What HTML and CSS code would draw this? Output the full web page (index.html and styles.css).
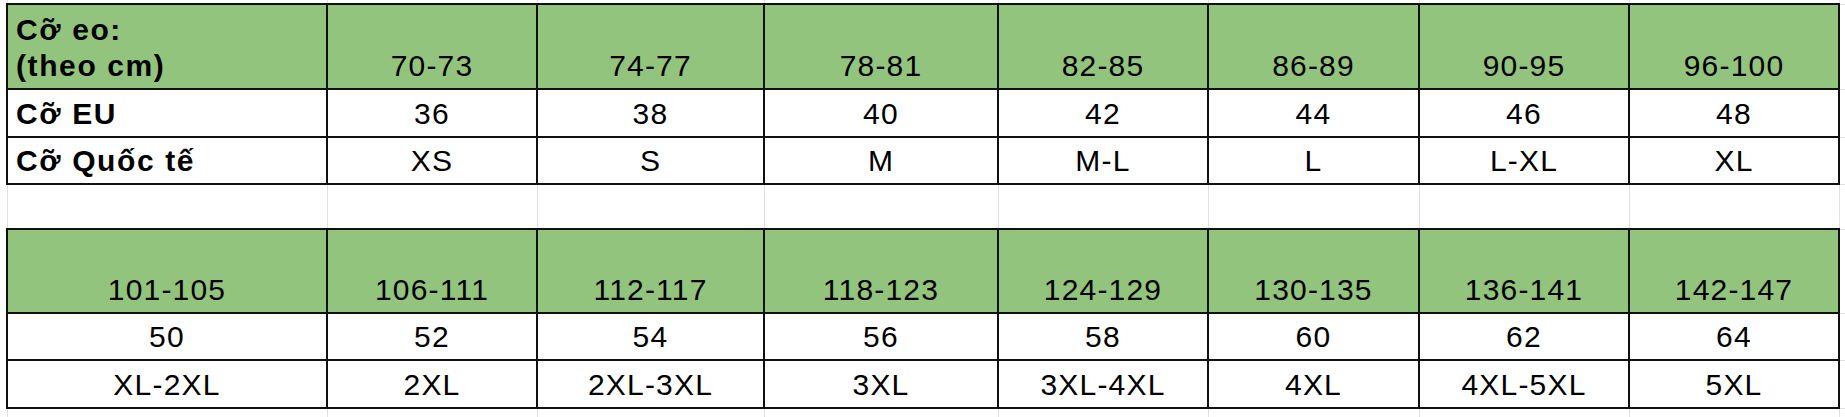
FILE: index.html
```html
<!DOCTYPE html>
<html lang="vi">
<head>
<meta charset="utf-8">
<title>Bảng cỡ</title>
<link rel="stylesheet" href="styles.css">
</head>
<body>
<table class="sheet">
  <colgroup>
    <col class="c-label">
    <col class="c-a"><col class="c-b"><col class="c-c"><col class="c-a"><col class="c-d"><col class="c-a"><col class="c-a">
    <col class="c-edge">
  </colgroup>
  <tbody>
    <tr class="r-top">
      <td class="grid"></td><td class="grid"></td><td class="grid"></td><td class="grid"></td><td class="grid"></td><td class="grid"></td><td class="grid"></td><td class="grid"></td><td class="grid"></td>
    </tr>
    <tr class="r-head">
      <td class="cell head label">Cỡ eo:<br>(theo cm)</td>
      <td class="cell head">70-73</td>
      <td class="cell head">74-77</td>
      <td class="cell head">78-81</td>
      <td class="cell head">82-85</td>
      <td class="cell head">86-89</td>
      <td class="cell head">90-95</td>
      <td class="cell head">96-100</td>
      <td class="grid"></td>
    </tr>
    <tr class="r-48">
      <td class="cell label">Cỡ EU</td>
      <td class="cell">36</td><td class="cell">38</td><td class="cell">40</td><td class="cell">42</td><td class="cell">44</td><td class="cell">46</td><td class="cell">48</td>
      <td class="grid"></td>
    </tr>
    <tr class="r-47">
      <td class="cell label">Cỡ Quốc tế</td>
      <td class="cell">XS</td><td class="cell">S</td><td class="cell">M</td><td class="cell">M-L</td><td class="cell">L</td><td class="cell">L-XL</td><td class="cell">XL</td>
      <td class="grid"></td>
    </tr>
    <tr class="r-gap">
      <td class="grid"></td><td class="grid"></td><td class="grid"></td><td class="grid"></td><td class="grid"></td><td class="grid"></td><td class="grid"></td><td class="grid"></td><td class="grid"></td>
    </tr>
    <tr class="r-head2">
      <td class="cell head">101-105</td>
      <td class="cell head">106-111</td>
      <td class="cell head">112-117</td>
      <td class="cell head">118-123</td>
      <td class="cell head">124-129</td>
      <td class="cell head">130-135</td>
      <td class="cell head">136-141</td>
      <td class="cell head">142-147</td>
      <td class="grid"></td>
    </tr>
    <tr class="r-47">
      <td class="cell">50</td><td class="cell">52</td><td class="cell">54</td><td class="cell">56</td><td class="cell">58</td><td class="cell">60</td><td class="cell">62</td><td class="cell">64</td>
      <td class="grid"></td>
    </tr>
    <tr class="r-48">
      <td class="cell">XL-2XL</td><td class="cell">2XL</td><td class="cell">2XL-3XL</td><td class="cell">3XL</td><td class="cell">3XL-4XL</td><td class="cell">4XL</td><td class="cell">4XL-5XL</td><td class="cell">5XL</td>
      <td class="grid"></td>
    </tr>
    <tr class="r-bottom">
      <td class="grid"></td><td class="grid"></td><td class="grid"></td><td class="grid"></td><td class="grid"></td><td class="grid"></td><td class="grid"></td><td class="grid"></td><td class="grid"></td>
    </tr>
  </tbody>
</table>
</body>
</html>
```
FILE: styles.css
```css
html, body {
  margin: 0;
  padding: 0;
  background: #ffffff;
}
body {
  overflow: hidden;
}
.sheet {
  margin-left: 6px;
  border-collapse: collapse;
  table-layout: fixed;
  width: 1838px;
  font-family: "Liberation Sans", Arial, sans-serif;
  font-size: 30px;
  letter-spacing: 1.2px;
  color: #000000;
}
.c-label { width: 320px; }
.c-a { width: 210px; }
.c-b { width: 227px; }
.c-c { width: 234px; }
.c-d { width: 211px; }
.c-edge { width: 6px; }

.sheet .grid {
  padding: 0;
  border: 1px solid #e1e1e1;
}
.sheet .r-top .grid {
  border-top: none;
}
.sheet .r-bottom .grid {
  border-bottom: none;
}
.sheet .cell {
  border: 2px solid #111111;
  text-align: center;
  vertical-align: bottom;
  line-height: 36px;
  padding: 0 8px 4px 8px;
  white-space: nowrap;
}
.sheet .head {
  background: #93c47d;
}
.sheet .label {
  text-align: left;
  font-weight: bold;
  letter-spacing: 1.6px;
}
.r-top { height: 4px; }
.r-head { height: 85px; }
.r-48 { height: 48px; }
.r-47 { height: 47px; }
.r-gap { height: 45px; }
.r-head2 { height: 84px; }
.r-bottom { height: 12px; }
```
